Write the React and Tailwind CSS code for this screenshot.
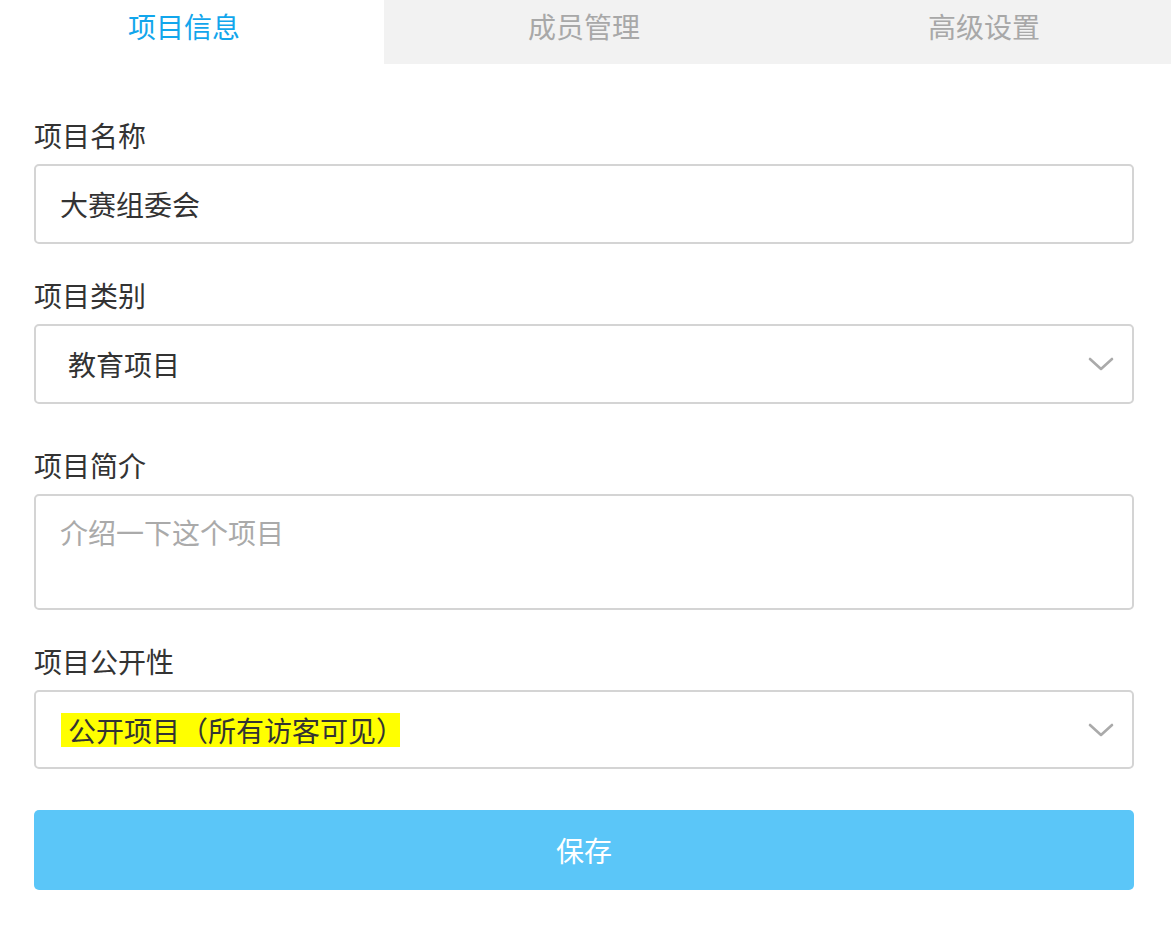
import React, { useState } from "react";

const font = { fontFamily: '"Noto Sans CJK SC", "Noto Sans", sans-serif' };

const Chevron = () => (
  <svg width="26" height="14" viewBox="0 0 26 14" fill="none">
    <path d="M2 2 L13 12 L24 2" stroke="#aaaaaa" strokeWidth="2.6" strokeLinecap="round" strokeLinejoin="round" />
  </svg>
);

const tabs = ["项目信息", "成员管理", "高级设置"];

const App = () => {
  const [activeTab, setActiveTab] = useState(0);

  return (
    <div className="w-[1171px] h-[926px] bg-white overflow-hidden" style={font}>
      {/* Tabs */}
      <div className="flex h-16">
        {tabs.map((t, i) => (
          <button
            key={t}
            onClick={() => setActiveTab(i)}
            className={`h-16 pb-3 flex items-center justify-center text-[28px] leading-10 ${
              i === 0 ? "w-[384px] pr-4" : i === 1 ? "w-[400px]" : "flex-1 pl-[13px]"
            } ${activeTab === i ? "bg-white text-[#12a6ec]" : "bg-[#f2f2f2] text-[#a8a8a8]"}`}
          >
            {t}
          </button>
        ))}
      </div>

      {/* Form */}
      <div className="pl-[34px] pr-[37px] pt-[51px] text-[#333333]">
        <div>
          <div className="h-10 leading-10 text-[28px] mb-[9px]">项目名称</div>
          <input
            defaultValue="大赛组委会"
            className="w-full h-20 border-2 border-[#d4d4d4] rounded-[5px] px-6 text-[28px] text-[#333333] outline-none"
            style={font}
          />
        </div>

        <div className="mt-[31px]">
          <div className="h-10 leading-10 text-[28px] mb-[9px]">项目类别</div>
          <div className="w-full h-20 border-2 border-[#d4d4d4] rounded-[5px] pl-8 pr-[18px] flex items-center justify-between text-[28px]">
            <span>教育项目</span>
            <Chevron />
          </div>
        </div>

        <div className="mt-[41px]">
          <div className="h-10 leading-10 text-[28px] mb-[9px]">项目简介</div>
          <textarea
            placeholder="介绍一下这个项目"
            className="block w-full h-[116px] border-2 border-[#d4d4d4] rounded-[5px] px-6 pt-4 text-[28px] leading-10 resize-none outline-none placeholder:text-[#aaaaaa]"
            style={font}
          />
        </div>

        <div className="mt-[31px]">
          <div className="h-10 leading-10 text-[28px] mb-[9px]">项目公开性</div>
          <div className="w-full h-[79px] border-2 border-[#d4d4d4] rounded-[5px] pl-[25px] pr-[18px] flex items-center justify-between text-[28px]">
            <span className="inline-block bg-[#ffff00] pl-[7px] w-[339px] h-[34px] leading-[34px] whitespace-nowrap overflow-visible">
              公开项目（所有访客可见）
            </span>
            <Chevron />
          </div>
        </div>

        <button className="mt-[41px] w-full h-20 bg-[#5bc6f8] rounded-[5px] text-white text-[28px]">
          保存
        </button>
      </div>
    </div>
  );
};

export default App;
